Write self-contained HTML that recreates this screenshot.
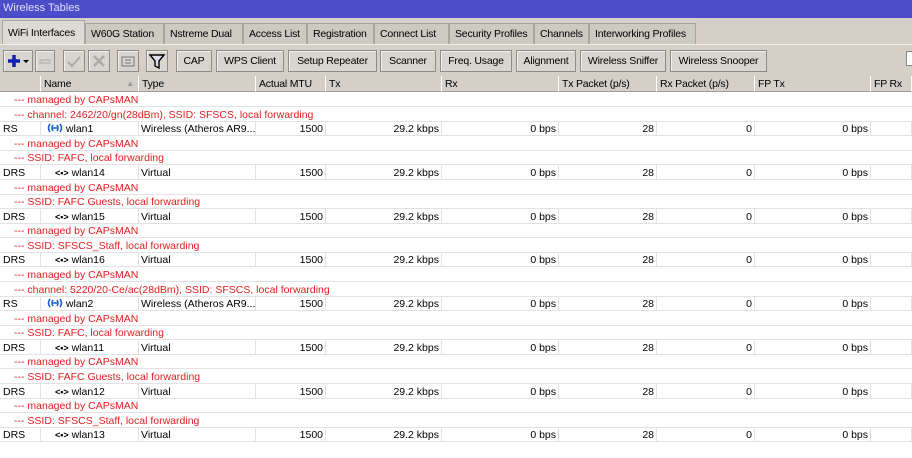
<!DOCTYPE html>
<html><head><style>
*{box-sizing:border-box;margin:0;padding:0}
body{width:912px;height:458px;overflow:hidden;background:#d4d0c8;font-family:"Liberation Sans",sans-serif;font-size:10.5px;color:#000;position:relative}
.a{position:absolute;white-space:nowrap}
.title{left:0;top:0;width:912px;height:18px;background:#4a4cc8;color:#e0e0ff;font-size:11px;padding:2px 0 0 3px}
.tab{top:23px;height:21px;border:1px solid #a9a6a0;border-bottom:none;background:#cdcac2;padding:4px 0 0 5px;letter-spacing:-0.2px}
.tab.act{top:20px;height:25px;background:#dedbd4;padding-top:6px}
.btn{top:50px;height:22px;border:1px solid #8f8c86;background:#d8d5ce;text-align:center;padding-top:4px;box-shadow:inset 1px 1px 0 #f2f0ec;letter-spacing:-0.2px}
.grid{left:0;top:76px;width:912px;height:382px;background:#fff}
.hd{top:76px;height:16px;background:#d4d0c8;border-right:1px solid #fff;border-bottom:1px solid #a0a0a0;padding:2px 0 0 3px;letter-spacing:-0.2px}
.row{left:0;width:912px;height:15px;border-bottom:1px solid #e2e2e2}
.c{position:absolute;top:0;height:14px;padding-top:2px;border-right:1px solid #e2e2e2}
.r{text-align:right;padding-right:2px}
.red{color:#e02020;padding-left:14px;padding-top:2px}
</style></head><body>
<div class="a title">Wireless Tables</div>
<div class="a tab act" style="left:2px;width:83px">WiFi Interfaces</div>
<div class="a tab" style="left:85px;width:79px">W60G Station</div>
<div class="a tab" style="left:164px;width:79px">Nstreme Dual</div>
<div class="a tab" style="left:243px;width:64px">Access List</div>
<div class="a tab" style="left:307px;width:67px">Registration</div>
<div class="a tab" style="left:374px;width:75px">Connect List</div>
<div class="a tab" style="left:449px;width:85px">Security Profiles</div>
<div class="a tab" style="left:534px;width:55px">Channels</div>
<div class="a tab" style="left:589px;width:107px">Interworking Profiles</div>
<div class="a" style="left:0;top:44px;width:912px;height:1px;background:#f0eee8"></div>

<div class="a btn" style="left:3px;width:30px;padding-top:0"><svg width="28" height="20"><path d="M10 4v12M4 10h12" stroke="#1020b0" stroke-width="3.5"/><path d="M19 9h6l-3 3z" fill="#000"/></svg></div>
<div class="a btn" style="left:35px;width:20px;padding-top:0"><svg width="18" height="20"><rect x="4" y="9" width="10" height="3" fill="none" stroke="#aaa"/></svg></div>
<div class="a btn" style="left:63px;width:22px;padding-top:0"><svg width="20" height="20"><path d="M4 11l4 4 8-9" stroke="#aaa" fill="none" stroke-width="2"/></svg></div>
<div class="a btn" style="left:88px;width:22px;padding-top:0"><svg width="20" height="20"><path d="M5 5l10 10M15 5L5 15" stroke="#aaa" stroke-width="2.5"/></svg></div>
<div class="a btn" style="left:117px;width:22px;padding-top:0"><svg width="20" height="20"><rect x="4" y="6" width="12" height="9" fill="none" stroke="#777"/><path d="M7 9h6M7 12h6" stroke="#777"/></svg></div>
<div class="a btn" style="left:146px;width:22px;padding-top:0"><svg width="20" height="20"><path d="M3 4h14l-5 6v7l-4-2v-5z" fill="#dde" stroke="#000" stroke-width="1.4"/></svg></div>
<div class="a btn" style="left:176px;width:36px">CAP</div>
<div class="a btn" style="left:216px;width:68px">WPS Client</div>
<div class="a btn" style="left:288px;width:89px">Setup Repeater</div>
<div class="a btn" style="left:380px;width:56px">Scanner</div>
<div class="a btn" style="left:440px;width:72px">Freq. Usage</div>
<div class="a btn" style="left:516px;width:60px">Alignment</div>
<div class="a btn" style="left:580px;width:86px">Wireless Sniffer</div>
<div class="a btn" style="left:670px;width:97px">Wireless Snooper</div>
<div class="a" style="left:906px;top:51px;width:8px;height:15px;background:#fff;border:1px solid #888"></div>

<div class="a grid"></div>
<div class="a hd" style="left:0;width:41px"></div>
<div class="a hd" style="left:41px;width:98px">Name<span style="position:absolute;right:4px;color:#999;font-size:8px;top:3px">▲</span></div>
<div class="a hd" style="left:139px;width:117px">Type</div>
<div class="a hd" style="left:256px;width:70px">Actual MTU</div>
<div class="a hd" style="left:326px;width:116px">Tx</div>
<div class="a hd" style="left:442px;width:117px">Rx</div>
<div class="a hd" style="left:559px;width:98px">Tx Packet (p/s)</div>
<div class="a hd" style="left:657px;width:98px">Rx Packet (p/s)</div>
<div class="a hd" style="left:755px;width:116px">FP Tx</div>
<div class="a hd" style="left:871px;width:41px">FP Rx</div>

<div id="rows"></div>
<script>
var W='<svg width="16" height="10" style="vertical-align:-1px"><path d="M3 1Q0 5 3 9M6 2Q4 5 6 8M13 1Q16 5 13 9M10 2Q12 5 10 8" stroke="#1a5fd0" stroke-width="1.6" fill="none"/><path d="M6 5h4" stroke="#1a5fd0" stroke-width="1.5"/></svg>';
var V='<span style="font-size:9px;font-weight:bold">&lt;•&gt;</span>';
var R=[["c","--- managed by CAPsMAN"],["c","--- channel: 2462/20/gn(28dBm), SSID: SFSCS, local forwarding"],["d","RS",W,"wlan1","Wireless (Atheros AR9..."],
["c","--- managed by CAPsMAN"],["c","--- SSID: FAFC, local forwarding"],["d","DRS",V,"wlan14","Virtual"],
["c","--- managed by CAPsMAN"],["c","--- SSID: FAFC Guests, local forwarding"],["d","DRS",V,"wlan15","Virtual"],
["c","--- managed by CAPsMAN"],["c","--- SSID: SFSCS_Staff, local forwarding"],["d","DRS",V,"wlan16","Virtual"],
["c","--- managed by CAPsMAN"],["c","--- channel: 5220/20-Ce/ac(28dBm), SSID: SFSCS, local forwarding"],["d","RS",W,"wlan2","Wireless (Atheros AR9..."],
["c","--- managed by CAPsMAN"],["c","--- SSID: FAFC, local forwarding"],["d","DRS",V,"wlan11","Virtual"],
["c","--- managed by CAPsMAN"],["c","--- SSID: FAFC Guests, local forwarding"],["d","DRS",V,"wlan12","Virtual"],
["c","--- managed by CAPsMAN"],["c","--- SSID: SFSCS_Staff, local forwarding"],["d","DRS",V,"wlan13","Virtual"]];
var h='';
R.forEach(function(r,i){var t=(92+i*14.58).toFixed(1);
if(r[0]=="c"){h+='<div class="a row red" style="top:'+t+'px">'+r[1]+'</div>';}
else{var ind=r[2]==W?'6px':'14px';
h+='<div class="a row" style="top:'+t+'px">'+
'<div class="c" style="left:0;width:41px;padding-left:3px">'+r[1]+'</div>'+
'<div class="c" style="left:41px;width:98px;padding-left:'+ind+'">'+r[2]+' '+r[3]+'</div>'+
'<div class="c" style="left:139px;width:117px;padding-left:2px">'+r[4]+'</div>'+
'<div class="c r" style="left:256px;width:70px">1500</div>'+
'<div class="c r" style="left:326px;width:116px">29.2 kbps</div>'+
'<div class="c r" style="left:442px;width:117px">0 bps</div>'+
'<div class="c r" style="left:559px;width:98px">28</div>'+
'<div class="c r" style="left:657px;width:98px">0</div>'+
'<div class="c r" style="left:755px;width:116px">0 bps</div>'+
'<div class="c" style="left:871px;width:41px"></div></div>';}
});
document.getElementById('rows').innerHTML=h;
</script>
</body></html>
